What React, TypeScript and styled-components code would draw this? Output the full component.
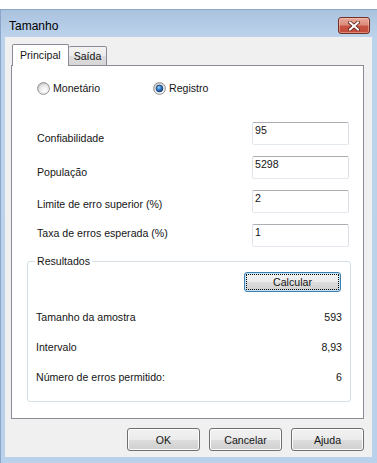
import styled, { createGlobalStyle } from "styled-components"

const GlobalStyle = createGlobalStyle`
  html, body {
    margin: 0;
    padding: 0;
    background: #fff;
  }
  body {
    font-family: "Liberation Sans", Arial, sans-serif;
    font-size: 10.6px;
    color: #151515;
  }
`

const fields = [
  { label: "Confiabilidade", value: "95", dy: 10 },
  { label: "População", value: "5298", dy: 10 },
  { label: "Limite de erro superior (%)", value: "2", dy: 8 },
  { label: "Taxa de erros esperada (%)", value: "1", dy: 3 },
]

const results = [
  { label: "Tamanho da amostra", value: "593" },
  { label: "Intervalo", value: "8,93" },
  { label: "Número de erros permitido:", value: "6" },
]

const Radio = ({ checked }: { checked?: boolean }) => (
  <RadioIcon width="13" height="13" viewBox="0 0 13 13">
    <defs>
      <radialGradient id="rb-off" cx="0.6" cy="0.65" r="0.7">
        <stop offset="0" stopColor="#ffffff" />
        <stop offset="0.6" stopColor="#e8e8e8" />
        <stop offset="1" stopColor="#bdbdbd" />
      </radialGradient>
      <radialGradient id="rb-dot" cx="0.4" cy="0.35" r="0.7">
        <stop offset="0" stopColor="#a9d4f8" />
        <stop offset="0.45" stopColor="#2f7fd0" />
        <stop offset="1" stopColor="#173f7a" />
      </radialGradient>
    </defs>
    <circle cx="6.5" cy="6.5" r="5.9" fill="url(#rb-off)" stroke="#949494" strokeWidth="1" />
    {checked && <circle cx="6.5" cy="6.5" r="3.4" fill="url(#rb-dot)" stroke="#1d3f6e" strokeWidth="0.8" />}
  </RadioIcon>
)

const App = () => {
  return (
    <Page>
      <GlobalStyle />
      <Window>
        <TitleBar>
          <Title>Tamanho</Title>
          <CloseButton>
            <svg width="12" height="10" viewBox="0 0 12 10">
              <path d="M2 1.5 L10 8.5 M10 1.5 L2 8.5" stroke="#5a1e16" strokeWidth="3.6" strokeLinecap="square" />
              <path d="M2 1.5 L10 8.5 M10 1.5 L2 8.5" stroke="#ffffff" strokeWidth="2" strokeLinecap="square" />
            </svg>
          </CloseButton>
        </TitleBar>
        <Client>
          <TabStrip>
            <Tab $active>Principal</Tab>
            <Tab>Saída</Tab>
          </TabStrip>
          <Panel>
            <RadioRow>
              <RadioItem $w={116}>
                <Radio />
                <span>Monetário</span>
              </RadioItem>
              <RadioItem>
                <Radio checked />
                <span>Registro</span>
              </RadioItem>
            </RadioRow>
            <Fields>
              {fields.map((f) => (
                <FieldRow key={f.label}>
                  <FieldLabel $dy={f.dy}>{f.label}</FieldLabel>
                  <TextBox>{f.value}</TextBox>
                </FieldRow>
              ))}
            </Fields>
            <Group>
              <Legend>Resultados</Legend>
              <CalcHold>
                <CalcButton>Calcular</CalcButton>
              </CalcHold>
              {results.map((r) => (
                <ResultRow key={r.label}>
                  <span>{r.label}</span>
                  <span>{r.value}</span>
                </ResultRow>
              ))}
            </Group>
          </Panel>
          <ButtonRow>
            <DialogButton>OK</DialogButton>
            <DialogButton>Cancelar</DialogButton>
            <DialogButton>Ajuda</DialogButton>
          </ButtonRow>
        </Client>
      </Window>
    </Page>
  )
}

export default App

const Page = styled.div`
padding-top: 9px;
`

const Window = styled.div`
width: 377px;
height: 454px;
box-sizing: border-box;
display: flex;
flex-direction: column;
padding: 0 5px 6px 5px;
background: linear-gradient(to bottom, #a9c2df 0px, #bcd3eb 28px, #b9d1ea 100%);
box-shadow: inset 1px 1px 0 #8aa6c8;
`

const TitleBar = styled.div`
height: 28px;
display: flex;
justify-content: space-between;
align-items: flex-start;
`

const Title = styled.div`
font-size: 12px;
line-height: 14px;
margin-top: 10px;
padding-left: 4px;
color: #000;
`

const CloseButton = styled.div`
width: 32px;
height: 17px;
box-sizing: border-box;
margin-top: 8px;
margin-right: 2px;
display: flex;
align-items: center;
justify-content: center;
border: 1px solid #6e3025;
border-radius: 3px;
background: linear-gradient(to bottom, #e9aa9c 0%, #dc8b7b 45%, #c75443 55%, #c24a39 100%);
box-shadow: inset 0 0 0 1px rgba(255, 210, 200, 0.45);
`

const Client = styled.div`
flex: 1;
display: flex;
flex-direction: column;
padding: 7px 8px 6px 6px;
background: #f0f0f0;
`

const TabStrip = styled.div`
height: 22px;
display: flex;
align-items: flex-end;
padding-left: 1px;
margin-bottom: -1px;
position: relative;
z-index: 1;
`

const Tab = styled.div<{ $active?: boolean }>`
box-sizing: border-box;
height: ${(p) => (p.$active ? "22px" : "20px")};
padding: ${(p) => (p.$active ? "4px 7px 0 7px" : "3px 5px 0 5px")};
line-height: 13px;
border: 1px solid #898c95;
border-bottom: ${(p) => (p.$active ? "none" : "1px solid #898c95")};
border-left: ${(p) => (p.$active ? "1px solid #898c95" : "none")};
border-radius: 2px 2px 0 0;
background: ${(p) => (p.$active ? "#fff" : "linear-gradient(to bottom, #f3f3f3 0%, #ebebeb 50%, #dddddd 51%, #d6d6d6 100%)")};
`

const Panel = styled.div`
height: 354px;
box-sizing: border-box;
border: 1px solid #898c95;
background: #fff;
display: flex;
flex-direction: column;
`

const RadioRow = styled.div`
display: flex;
align-items: center;
height: 13px;
margin-top: 16px;
padding-left: 25px;
line-height: 13px;
`

const RadioItem = styled.div<{ $w?: number }>`
display: flex;
align-items: center;
gap: 3px;
width: ${(p) => (p.$w ? `${p.$w}px` : "auto")};
`

const RadioIcon = styled.svg`
display: block;
`

const Fields = styled.div`
display: flex;
flex-direction: column;
gap: 11px;
margin-top: 27px;
padding: 0 14px 0 25px;
`

const FieldRow = styled.div`
height: 23px;
display: flex;
justify-content: space-between;
align-items: flex-start;
`

const FieldLabel = styled.div<{ $dy: number }>`
line-height: 13px;
margin-top: ${(p) => p.$dy}px;
`

const TextBox = styled.div`
width: 97px;
height: 23px;
box-sizing: border-box;
padding: 1px 2px;
line-height: 13px;
border: 1px solid;
border-color: #abadb3 #dbdfe6 #e3e9ef #e2e3ea;
border-radius: 2px;
background: #fff;
`

const Group = styled.fieldset`
margin: 8px 12px 0 15px;
padding: 0 8px 9px 8px;
border: 1px solid #d5dfe5;
border-radius: 3px;
min-width: 0;
`

const Legend = styled.legend`
margin-left: -1px;
padding: 0 2px;
line-height: 13px;
`

const CalcHold = styled.div`
display: flex;
justify-content: flex-end;
margin-top: 4px;
margin-right: 1px;
margin-bottom: 10px;
`

const ResultRow = styled.div`
height: 30px;
line-height: 30px;
display: flex;
justify-content: space-between;
`

const ButtonBase = styled.div`
box-sizing: border-box;
display: flex;
align-items: center;
justify-content: center;
border-radius: 3px;
background: linear-gradient(to bottom, #f2f2f2 0%, #ebebeb 50%, #dddddd 51%, #cfcfcf 100%);
`

const CalcButton = styled(ButtonBase)`
width: 97px;
height: 20px;
border: 1px solid #3c7fb1;
box-shadow: inset 0 0 0 1px #c4e5f6;
outline: 1px dotted #000;
outline-offset: -3px;
`

const ButtonRow = styled.div`
display: flex;
justify-content: flex-end;
gap: 9px;
margin-top: 9px;
`

const DialogButton = styled(ButtonBase)`
width: 73px;
height: 23px;
border: 1px solid #707070;
box-shadow: inset 0 0 0 1px #fbfbfb;
`
